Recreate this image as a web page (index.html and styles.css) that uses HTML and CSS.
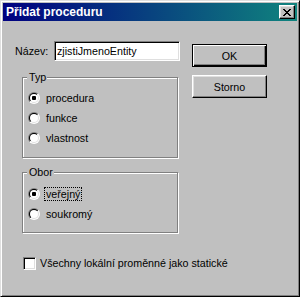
FILE: index.html
```html
<!DOCTYPE html>
<html lang="cs">
    <head>
        <meta charset="utf-8">
        <link rel="stylesheet" href="styles.css">
    </head>
    <body>

        <div class="window">
            <div class="titlebar">
                <span class="title">Přidat proceduru</span>
                <button class="close">
                    <svg width="8" height="7" viewBox="0 0 8 7" shape-rendering="crispEdges">
                        <path d="M0 0h2v1H0zM6 0h2v1H6zM1 1h2v1H1zM5 1h2v1H5zM2 2h4v1H2zM3 3h2v1H3zM2 4h4v1H2zM1 5h2v1H1zM5 5h2v1H5zM0 6h2v1H0zM6 6h2v1H6z" fill="#000"/>
                    </svg>
                </button>
            </div>

            <div class="client">
                <div class="main">
                    <div class="left">
                        <div class="field">
                            <label for="name">Název:</label>
                            <input type="text" id="name" value="zjistiJmenoEntity">
                        </div>

                        <fieldset class="group group-typ">
                            <legend>Typ</legend>
                            <div class="opt"><span class="radio checked"></span><span class="lbl">procedura</span></div>
                            <div class="opt"><span class="radio"></span><span class="lbl">funkce</span></div>
                            <div class="opt"><span class="radio"></span><span class="lbl">vlastnost</span></div>
                        </fieldset>

                        <fieldset class="group group-obor">
                            <legend>Obor</legend>
                            <div class="opt"><span class="radio checked"></span><span class="lbl focus">veřejný</span></div>
                            <div class="opt"><span class="radio"></span><span class="lbl">soukromý</span></div>
                        </fieldset>
                    </div>

                    <div class="buttons">
                        <button class="btn default">OK</button>
                        <button class="btn">Storno</button>
                    </div>
                </div>

                <div class="check-row">
                    <span class="checkbox"></span>
                    <span>Všechny lokální proměnné jako statické</span>
                </div>
            </div>
        </div>

    </body>
</html>
```

FILE: styles.css
```css
*{
    box-sizing: border-box;
}

body{
    margin: 0;
    font-family: "Liberation Sans", Arial, sans-serif;
    font-size: 10.7px;
    color: #000;
}

.window{
    width: 300px;
    height: 297px;
    background: #c0c0c0;
    border: 1px solid;
    border-color: #dfdfdf #000 #000 #dfdfdf;
    box-shadow: inset 1px 1px #fff, inset -1px -1px #808080;
    padding: 2px;
}

.titlebar{
    height: 18px;
    display: flex;
    align-items: center;
    justify-content: space-between;
    background: linear-gradient(to right, #000080, #10847e);
    padding: 0 2px 0 3px;
}

.title{
    color: #fff;
    font-weight: bold;
    font-size: 12px;
}

.close{
    width: 16px;
    height: 14px;
    padding: 0;
    display: flex;
    align-items: center;
    justify-content: center;
    background: #c0c0c0;
    border: 1px solid;
    border-color: #fff #000 #000 #fff;
    box-shadow: inset -1px -1px #808080, inset 1px 1px #dfdfdf;
}

.client{
    padding: 20px 0 0 12px;
}

.main{
    display: flex;
    gap: 12px;
}

.left{
    width: 165px;
}

.field{
    display: flex;
    align-items: center;
    height: 20px;
}

.field label{
    width: 39px;
}

.field input{
    width: 126px;
    height: 20px;
    margin: 0;
    padding: 0 2px;
    font: inherit;
    color: #000;
    background: #fff;
    border: 1px solid;
    border-color: #808080 #fff #fff #808080;
    box-shadow: inset 1px 1px #000, inset -1px -1px #dfdfdf;
    outline: none;
}

.group{
    width: 156px;
    margin: 0 0 0 7px;
    min-width: 0;
    border: 1px solid #808080;
    box-shadow: inset 1px 1px #fff, 1px 1px #fff;
    padding: 4px 0 9px 5px;
}

.group-typ{
    margin-top: 10px;
}

.group-obor{
    margin-top: 8px;
    padding-top: 5px;
    padding-bottom: 8px;
}

.group legend{
    padding: 0 1px 0 2px;
    margin-left: -1px;
    background: #c0c0c0;
    line-height: 13px;
}

.opt{
    display: flex;
    align-items: center;
    height: 20px;
    gap: 4px;
}

.radio{
    position: relative;
    width: 12px;
    height: 12px;
    border-radius: 50%;
    background: linear-gradient(135deg, #808080 50%, #fff 50%);
}

.radio::before{
    content: "";
    position: absolute;
    inset: 1px;
    border-radius: 50%;
    background: linear-gradient(135deg, #000 50%, #dfdfdf 50%);
}

.radio::after{
    content: "";
    position: absolute;
    inset: 2px;
    border-radius: 50%;
    background: #fff;
}

.radio.checked::after{
    background: radial-gradient(circle, #000 2px, #fff 2.5px);
}

.lbl{
    padding: 0 1px;
    border: 1px solid transparent;
    line-height: 12px;
}

.lbl.focus{
    border: 1px dotted #000;
}

.buttons{
    display: flex;
    flex-direction: column;
    gap: 8px;
    padding-top: 3px;
}

.btn{
    width: 75px;
    height: 23px;
    padding: 0;
    font: inherit;
    color: #000;
    background: #c0c0c0;
    border: 1px solid;
    border-color: #fff #000 #000 #fff;
    box-shadow: inset -1px -1px #808080, inset 1px 1px #dfdfdf;
}

.btn.default{
    border-color: #000;
    box-shadow: inset 1px 1px #fff, inset -1px -1px #000, inset -2px -2px #808080;
}

.check-row{
    display: flex;
    align-items: center;
    gap: 4px;
    height: 20px;
    margin: 20px 0 0 8px;
}

.checkbox{
    width: 13px;
    height: 13px;
    background: #fff;
    border: 1px solid;
    border-color: #808080 #fff #fff #808080;
    box-shadow: inset 1px 1px #000, inset -1px -1px #dfdfdf;
}
```
